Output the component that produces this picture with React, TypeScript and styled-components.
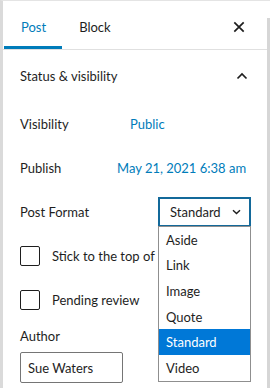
import * as React from "react";
import styled, { createGlobalStyle } from "styled-components";

const GlobalStyle = createGlobalStyle`
  body {
    margin: 0;
    background: #ffffff;
    font-family: Lato, "Noto Sans", sans-serif;
    color: #1e1e1e;
  }
`;

const Panel = styled.div`
  position: relative;
  width: 270px;
  height: 388px;
  box-sizing: border-box;
  border-top: 1px solid #e4e4e4;
  border-left: 3px solid #dadada;
  background: #ffffff;
  overflow: hidden;
  font-size: 13px;

  &::after {
    content: "";
    position: absolute;
    right: 0;
    top: 17px;
    width: 3px;
    bottom: 0;
    background: #d6d6d6;
  }
`;

const TabBar = styled.div`
  display: flex;
  align-items: stretch;
  height: 48px;
  border-bottom: 1px solid #e0e0e0;
`;

const Tab = styled.div<{ $active?: boolean }>`
  display: flex;
  align-items: center;
  padding: 3px 16px 0 17px;
  color: ${(p) => (p.$active ? "#007cba" : "#1e1e1e")};
  box-shadow: ${(p) => (p.$active ? "inset 0 -3px 0 #007cba" : "none")};
  margin-left: ${(p) => (p.$active ? "1px" : "0")};
`;

const CloseButton = styled.div`
  margin-left: auto;
  width: 48px;
  display: flex;
  align-items: center;
  justify-content: center;
  margin-right: 7px;
  padding-top: 3px;
`;

const Section = styled.div`
  padding: 0 17px;
`;

const SectionHeader = styled.div`
  display: flex;
  align-items: center;
  justify-content: space-between;
  height: 52px;
  padding-right: 5px;
`;

const Row = styled.div`
  display: flex;
  align-items: center;
  height: 44px;
`;

const Label = styled.span`
  width: 110px;
  flex-shrink: 0;
`;

const LinkValue = styled.span<{ $shift?: number }>`
  color: #007cba;
  margin-left: ${(p) => p.$shift ?? 0}px;
  white-space: nowrap;
`;

const SelectWrap = styled.div`
  position: relative;
  margin-left: 28px;
`;

const SelectBox = styled.div`
  width: 93px;
  height: 30px;
  box-sizing: border-box;
  border: 2px solid #13699a;
  display: flex;
  align-items: center;
  padding: 0 8px 0 10px;
  gap: 4px;
`;

const SelectText = styled.span`
  flex: 1;
`;

const OptionList = styled.ul`
  position: absolute;
  left: 0;
  top: 29px;
  width: 93px;
  margin: 0;
  padding: 0;
  list-style: none;
  box-sizing: border-box;
  border: 1px solid #8f8f8f;
  background: #ffffff;
  z-index: 2;
`;

const OptionItem = styled.li<{ $selected?: boolean }>`
  height: 25.6px;
  display: flex;
  align-items: center;
  padding-left: 7px;
  background: ${(p) => (p.$selected ? "#0078d7" : "transparent")};
  color: ${(p) => (p.$selected ? "#ffffff" : "#1e1e1e")};
`;

const CheckRow = styled.label`
  display: flex;
  align-items: center;
  gap: 12px;
  height: 44px;
  white-space: nowrap;
`;

const CheckBox = styled.span`
  width: 20px;
  height: 20px;
  box-sizing: border-box;
  border: 1px solid #1e1e1e;
  border-radius: 2px;
  flex-shrink: 0;
`;

const FieldLabel = styled.div`
  margin-top: 6px;
`;

const TextInput = styled.div`
  margin-top: 8px;
  width: 103px;
  height: 31px;
  box-sizing: border-box;
  border: 1px solid #757575;
  border-radius: 2px;
  display: flex;
  align-items: center;
  padding-left: 7px;
`;

const options = ["Aside", "Link", "Image", "Quote", "Standard", "Video"];

export default function App() {
  return (
    <>
      <GlobalStyle />
      <Panel>
        <TabBar>
          <Tab $active>Post</Tab>
          <Tab>Block</Tab>
          <CloseButton>
            <svg width="12" height="12" viewBox="0 0 12 12">
              <path d="M1.3 1.3 L10.7 10.7 M10.7 1.3 L1.3 10.7" stroke="#1e1e1e" strokeWidth="1.7" fill="none" />
            </svg>
          </CloseButton>
        </TabBar>
        <Section>
          <SectionHeader>
            <span>Status &amp; visibility</span>
            <svg width="12" height="8" viewBox="0 0 12 8">
              <path d="M1.5 6.5 L6 2 L10.5 6.5" stroke="#1e1e1e" strokeWidth="1.7" fill="none" />
            </svg>
          </SectionHeader>
          <Row>
            <Label>Visibility</Label>
            <LinkValue>Public</LinkValue>
          </Row>
          <Row>
            <Label>Publish</Label>
            <LinkValue $shift={-13}>May 21, 2021 6:38 am</LinkValue>
          </Row>
          <Row>
            <Label>Post Format</Label>
            <SelectWrap>
              <SelectBox>
                <SelectText>Standard</SelectText>
                <svg width="9" height="6" viewBox="0 0 9 6">
                  <path d="M1 1.2 L4.5 4.6 L8 1.2" stroke="#1e1e1e" strokeWidth="1.4" fill="none" />
                </svg>
              </SelectBox>
              <OptionList>
                {options.map((o) => (
                  <OptionItem key={o} $selected={o === "Standard"}>
                    {o}
                  </OptionItem>
                ))}
              </OptionList>
            </SelectWrap>
          </Row>
          <CheckRow>
            <CheckBox />
            <span>Stick to the top of</span>
          </CheckRow>
          <CheckRow>
            <CheckBox />
            <span>Pending review</span>
          </CheckRow>
          <FieldLabel>Author</FieldLabel>
          <TextInput>Sue Waters</TextInput>
        </Section>
      </Panel>
    </>
  );
}
